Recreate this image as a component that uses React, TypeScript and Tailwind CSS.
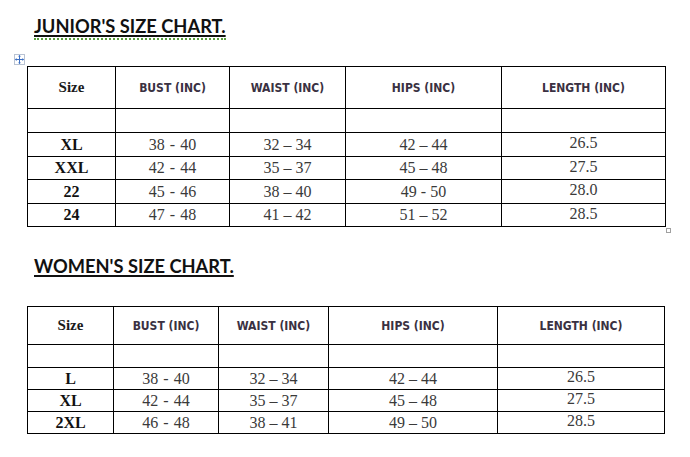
import React from "react";

type Row = [string, string, string, string, string];

function MoveIcon() {
  return (
    <div className="absolute left-[-13px] top-[-12px] w-[11px] h-[11px] border border-[#b9c3d3] bg-white flex items-center justify-center">
      <svg width="9" height="9" viewBox="0 0 9 9">
        <path d="M4.5 0.5 V8.5 M0.5 4.5 H8.5" fill="none" stroke="#3b6fc4" strokeWidth="1" />
        <g fill="#3b6fc4">
          <path d="M4.5 0 L6 1.6 H3 Z" />
          <path d="M4.5 9 L6 7.4 H3 Z" />
          <path d="M0 4.5 L1.6 3 V6 Z" />
          <path d="M9 4.5 L7.4 3 V6 Z" />
        </g>
      </svg>
    </div>
  );
}

const cell = "border border-black text-center p-0";
const dataCell =
  "border border-black text-center p-0 text-[16px] text-[#3a3a3a] leading-none [font-family:'Liberation_Serif','Times_New_Roman',serif]";

function SizeTable({
  tableW,
  colCls,
  headCls,
  emptyCls,
  rowCls,
  rows,
  move,
  resize,
}: {
  tableW: string;
  colCls: string[];
  headCls: string;
  emptyCls: string;
  rowCls: string[];
  rows: Row[];
  move?: boolean;
  resize?: boolean;
}) {
  const heads = ["BUST (INC)", "WAIST (INC)", "HIPS (INC)", "LENGTH (INC)"];
  return (
    <div className="relative w-fit">
      {move && <MoveIcon />}
      {resize && (
        <div className="absolute right-[-5px] bottom-[-6px] w-[5px] h-[5px] border border-[#a0a0a0] bg-white" />
      )}
      <table className={`border-collapse table-fixed ${tableW}`}>
        <colgroup>
          {colCls.map((c, i) => (
            <col key={i} className={c} />
          ))}
        </colgroup>
        <tbody>
          <tr className={headCls}>
            <td className={`${cell} text-[15px] font-bold text-[#1a1a1a] [font-family:'Liberation_Serif','Times_New_Roman',serif]`}>
              Size
            </td>
            {heads.map((h) => (
              <td
                key={h}
                className={`${cell} text-[12px] font-bold text-[#3a3142] [font-family:'DejaVu_Sans',sans-serif] [font-stretch:condensed]`}
              >
                {h}
              </td>
            ))}
          </tr>
          <tr className={emptyCls}>
            {colCls.map((_, i) => (
              <td key={i} className={cell} />
            ))}
          </tr>
          {rows.map((r, ri) => (
            <tr key={ri} className={rowCls[ri]}>
              <td className={`${dataCell} font-bold text-[#111]`}>{r[0]}</td>
              <td className={`${dataCell} [word-spacing:1px]`}>{r[1]}</td>
              <td className={dataCell}>{r[2]}</td>
              <td className={dataCell}>{r[3]}</td>
              <td className={`${dataCell} pb-[3px]`}>{r[4]}</td>
            </tr>
          ))}
        </tbody>
      </table>
    </div>
  );
}

export default function App() {
  const junior: Row[] = [
    ["XL", "38 - 40", "32 – 34", "42 – 44", "26.5"],
    ["XXL", "42 - 44", "35 – 37", "45 – 48", "27.5"],
    ["22", "45 - 46", "38 – 40", "49 - 50", "28.0"],
    ["24", "47 - 48", "41 – 42", "51 – 52", "28.5"],
  ];
  const women: Row[] = [
    ["L", "38 - 40", "32 – 34", "42 – 44", "26.5"],
    ["XL", "42 - 44", "35 – 37", "45 – 48", "27.5"],
    ["2XL", "46 - 48", "38 – 41", "49 – 50", "28.5"],
  ];
  return (
    <div className="w-[690px] h-[457px] bg-white pl-[27px] overflow-hidden">
      <div className="pt-[15px] pl-[7px] h-[37px] leading-[22px] text-[18.3px] font-bold text-[#111] [font-family:Lato,sans-serif]">
        <span className="relative inline-block underline decoration-[1.5px] underline-offset-[2px]">
          JUNIOR'S SIZE CHART.
          <span className="absolute left-0 right-0 top-[23px] h-[2px] border-b-2 border-dotted border-[#5a9e3e]" />
        </span>
      </div>
      <div className="mt-[29px]">
        <SizeTable
          tableW="w-[638px]"
          colCls={["w-[88px]", "w-[114px]", "w-[116px]", "w-[156px]", "w-[164px]"]}
          headCls="h-[42px]"
          emptyCls="h-[24px]"
          rowCls={["h-[24px]", "h-[23px]", "h-[24px]", "h-[23px]"]}
          rows={junior}
          move
          resize
        />
      </div>
      <div className="mt-[28px] pl-[7px] h-[22px] leading-[22px] text-[18.3px] font-bold text-[#111] [font-family:Lato,sans-serif]">
        <span className="underline decoration-[1.5px] underline-offset-[2px]">WOMEN'S SIZE CHART.</span>
      </div>
      <div className="mt-[29px]">
        <SizeTable
          tableW="w-[637px]"
          colCls={["w-[86px]", "w-[105px]", "w-[110px]", "w-[169px]", "w-[167px]"]}
          headCls="h-[38px]"
          emptyCls="h-[23px]"
          rowCls={["h-[22px]", "h-[22px]", "h-[22px]"]}
          rows={women}
        />
      </div>
    </div>
  );
}
